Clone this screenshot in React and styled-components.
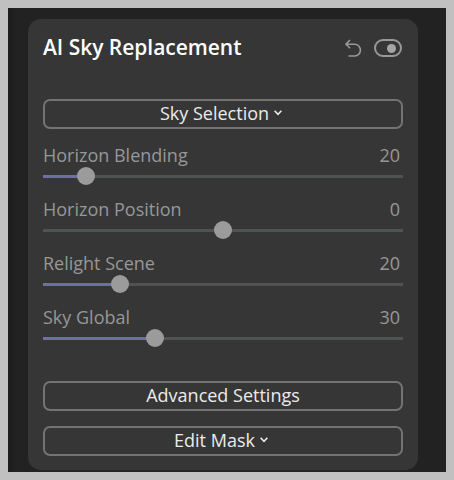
import styled, { createGlobalStyle } from 'styled-components';

const GlobalStyle = createGlobalStyle`
	* {
		box-sizing: border-box;
	}

	body {
		margin: 0;
		background-color: #c0c0c0;
		font-family: 'Open Sans', 'Noto Sans', sans-serif;
	}
`;

const Frame = styled.main`
	width: 454px;
	height: 480px;
	padding: 8px;
	background-color: #c0c0c0;
`;

const Backdrop = styled.div`
	height: 464px;
	padding: 11px 28px 2px 20px;
	background: linear-gradient(to right, #1b1b1b 0, #222222 8px);
`;

const Panel = styled.section`
	display: flex;
	flex-direction: column;
	height: 451px;
	padding: 14px 15px;
	border-radius: 13px;
	background-color: #363636;
`;

const Header = styled.header`
	display: flex;
	align-items: center;
	height: 30px;
	margin-bottom: 36px;
`;

const Title = styled.h1`
	flex: 1;
	margin: 0;
	padding-bottom: 2px;
	color: #ffffff;
	font-size: 21px;
	font-weight: 600;
	line-height: 28px;
	letter-spacing: -0.03px;
	white-space: nowrap;
`;

const IconButton = styled.button`
	display: flex;
	padding: 0;
	border: 0;
	background: none;
	color: #999999;
`;

const Toggle = styled.div`
	display: flex;
	align-items: center;
	justify-content: flex-end;
	width: 28px;
	height: 18px;
	margin: 0 1px 0 12px;
	padding-right: 4px;
	border: 2px solid #999999;
	border-radius: 9px;
`;

const ToggleDot = styled.span`
	width: 9px;
	height: 9px;
	border-radius: 50%;
	background-color: #a5a5a5;
`;

const OutlineButton = styled.button`
	display: flex;
	align-items: center;
	justify-content: center;
	gap: 5px;
	flex-shrink: 0;
	height: 30px;
	padding: 0 ${({ $menu }) => ($menu ? '4px' : '0')} 2px 0;
	border: 2px solid #737373;
	border-radius: 7px;
	background: none;
	color: #ebebeb;
	font-family: inherit;
	font-size: 18px;
	line-height: 24px;
`;

const Sliders = styled.div`
	margin: 14px 0 22px;
`;

const SliderRow = styled.div`
	height: 54px;
`;

const SliderLabel = styled.div`
	display: flex;
	justify-content: space-between;
	height: 24px;
	padding-right: 3px;
	color: #979797;
	font-size: 18px;
	line-height: 24px;
`;

const Track = styled.div`
	display: flex;
	align-items: center;
	height: 3px;
	margin-top: 8px;
	background-color: #4f5452;
`;

const Fill = styled.div`
	height: 3px;
	background-color: ${({ $active }) => ($active ? '#6c70a8' : 'transparent')};
`;

const Thumb = styled.span`
	flex-shrink: 0;
	width: 18px;
	height: 18px;
	margin: 0 0 1px -9px;
	border-radius: 50%;
	background-color: #9b9b9b;
`;

const UndoIcon = () => (
	<svg width="17" height="19" viewBox="0 0 17 19" fill="none" stroke="currentColor" strokeWidth="1.6">
		<path d="M5 1L1 5.2L5 9.2M1 5.2H9.8A5.6 5.9 0 0 1 9.8 17H3.5" />
	</svg>
);

const ChevronIcon = () => (
	<svg width="8" height="6" viewBox="0 0 8 6" fill="none" stroke="currentColor" strokeWidth="1.6">
		<path d="M0.6 0.8L4 4.4L7.4 0.8" />
	</svg>
);

const sliders = [
	{ label: 'Horizon Blending', value: 20, position: 43, active: true },
	{ label: 'Horizon Position', value: 0, position: 180, active: false },
	{ label: 'Relight Scene', value: 20, position: 77, active: true },
	{ label: 'Sky Global', value: 30, position: 112, active: true },
];

const Slider = ({ label, value, position, active }) => (
	<SliderRow>
		<SliderLabel>
			<span>{label}</span>
			<span>{value}</span>
		</SliderLabel>
		<Track>
			<Fill $active={active} style={{ width: position }} />
			<Thumb />
		</Track>
	</SliderRow>
);

const Actions = styled.div`
	display: flex;
	flex-direction: column;
	gap: 15px;
`;

export default function App() {
	return (
		<>
			<GlobalStyle />
			<Frame>
				<Backdrop>
					<Panel>
						<Header>
							<Title>AI Sky Replacement</Title>
							<IconButton aria-label="Undo">
								<UndoIcon />
							</IconButton>
							<Toggle>
								<ToggleDot />
							</Toggle>
						</Header>
						<OutlineButton $menu>
							Sky Selection
							<ChevronIcon />
						</OutlineButton>
						<Sliders>
							{sliders.map((slider) => (
								<Slider key={slider.label} {...slider} />
							))}
						</Sliders>
						<Actions>
							<OutlineButton>Advanced Settings</OutlineButton>
							<OutlineButton $menu>
								Edit Mask
								<ChevronIcon />
							</OutlineButton>
						</Actions>
					</Panel>
				</Backdrop>
			</Frame>
		</>
	);
}
